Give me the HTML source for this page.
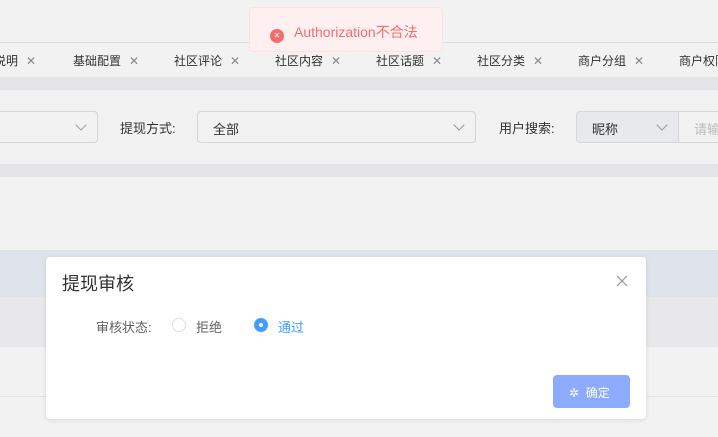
<!DOCTYPE html>
<html><head><meta charset="utf-8"><style>
*{box-sizing:border-box;margin:0;padding:0}
body{width:718px;height:437px;overflow:hidden;background:#f2f2f2;font-family:"Liberation Sans","Noto Sans CJK SC",sans-serif;position:relative;color:#606266}
.abs{position:absolute}
.tab{position:absolute;top:52px;font-size:12px;color:#303133;white-space:nowrap}
.tab span{color:#888;margin-left:8px;font-size:12px;font-weight:300}
.sel{position:absolute;top:111px;height:32px;border:1px solid #d4d6da;border-radius:4px;background:#f2f2f2;font-size:13px;color:#303133;padding:7px 15px;white-space:nowrap;overflow:hidden}
.arr{position:absolute;right:12px;top:9px;width:8px;height:8px;border-right:1px solid #999;border-bottom:1px solid #999;transform:rotate(45deg)}
.lbl{position:absolute;top:118px;font-size:13px;color:#303133}
</style></head><body>
<div class="abs" style="left:0;top:42px;width:718px;height:35px;border-top:1px solid #dcdce4;background:#f2f2f2"></div>
<div class="tab" style="left:-6px">说明<span>✕</span></div>
<div class="tab" style="left:73px">基础配置<span>✕</span></div>
<div class="tab" style="left:174px">社区评论<span>✕</span></div>
<div class="tab" style="left:275px">社区内容<span>✕</span></div>
<div class="tab" style="left:376px">社区话题<span>✕</span></div>
<div class="tab" style="left:477px">社区分类<span>✕</span></div>
<div class="tab" style="left:578px">商户分组<span>✕</span></div>
<div class="tab" style="left:679px">商户权限</div>
<div class="abs" style="left:0;top:77px;width:718px;height:13px;background:#e4e4e7"></div>
<div class="sel" style="left:-10px;width:108px"><div class="arr"></div></div>
<div class="lbl" style="left:120px">提现方式:</div>
<div class="sel" style="left:197px;width:279px">全部<div class="arr"></div></div>
<div class="lbl" style="left:499px">用户搜索:</div>
<div class="sel" style="left:576px;width:103px;background:#e8e9ec;border-radius:4px 0 0 4px">昵称<div class="arr"></div></div>
<div class="sel" style="left:678px;width:60px;border-radius:0;color:#bbb">请输入</div>
<div class="abs" style="left:0;top:164px;width:718px;height:13px;background:#e4e4e7"></div>
<div class="abs" style="left:0;top:250px;width:718px;height:47px;background:#dfe3ec"></div>
<div class="abs" style="left:0;top:297px;width:718px;height:50px;background:#e8e8ea"></div>
<div class="abs" style="left:0;top:396px;width:718px;height:1px;background:#dfe1e8"></div>
<div class="abs" style="left:249px;top:7px;width:194px;height:45px;background:#fef0f0;border:1px solid #fde2e2;border-radius:4px;color:#f56c6c;font-size:14px;padding:14px 0 0 20px;white-space:nowrap">
<span style="display:inline-block;width:14px;height:14px;border-radius:50%;background:#f56c6c;color:#fff;font-size:8px;text-align:center;line-height:14px;vertical-align:-1px;margin-right:10px">✕</span>Authorization不合法</div>
<div class="abs" style="left:46px;top:257px;width:600px;height:162px;background:#fff;border-radius:4px;box-shadow:0 1px 4px rgba(0,0,0,.12)">
<div class="abs" style="left:16px;top:13px;font-size:18px;color:#303133">提现审核</div>
<svg class="abs" style="left:570px;top:18px" width="12" height="12"><path d="M1 1L11 11M11 1L1 11" stroke="#909399" stroke-width="1.2"/></svg>
<div class="abs" style="left:50px;top:60px;font-size:13px;color:#606266">审核状态:</div>
<div class="abs" style="left:126px;top:61px;width:14px;height:14px;border:1px solid #dcdfe6;border-radius:50%"></div>
<div class="abs" style="left:150px;top:60px;font-size:13px;color:#606266">拒绝</div>
<div class="abs" style="left:208px;top:61px;width:14px;height:14px;background:#409eff;border-radius:50%"><div style="width:4px;height:4px;background:#fff;border-radius:50%;margin:5px"></div></div>
<div class="abs" style="left:232px;top:60px;font-size:13px;color:#409eff">通过</div>
<div class="abs" style="left:507px;top:118px;width:77px;height:33px;background:#8cabfc;border-radius:4px;color:#fff;font-size:12px;padding:9px 0 0 16px">✲ &nbsp;确定</div>
</div>
</body></html>
